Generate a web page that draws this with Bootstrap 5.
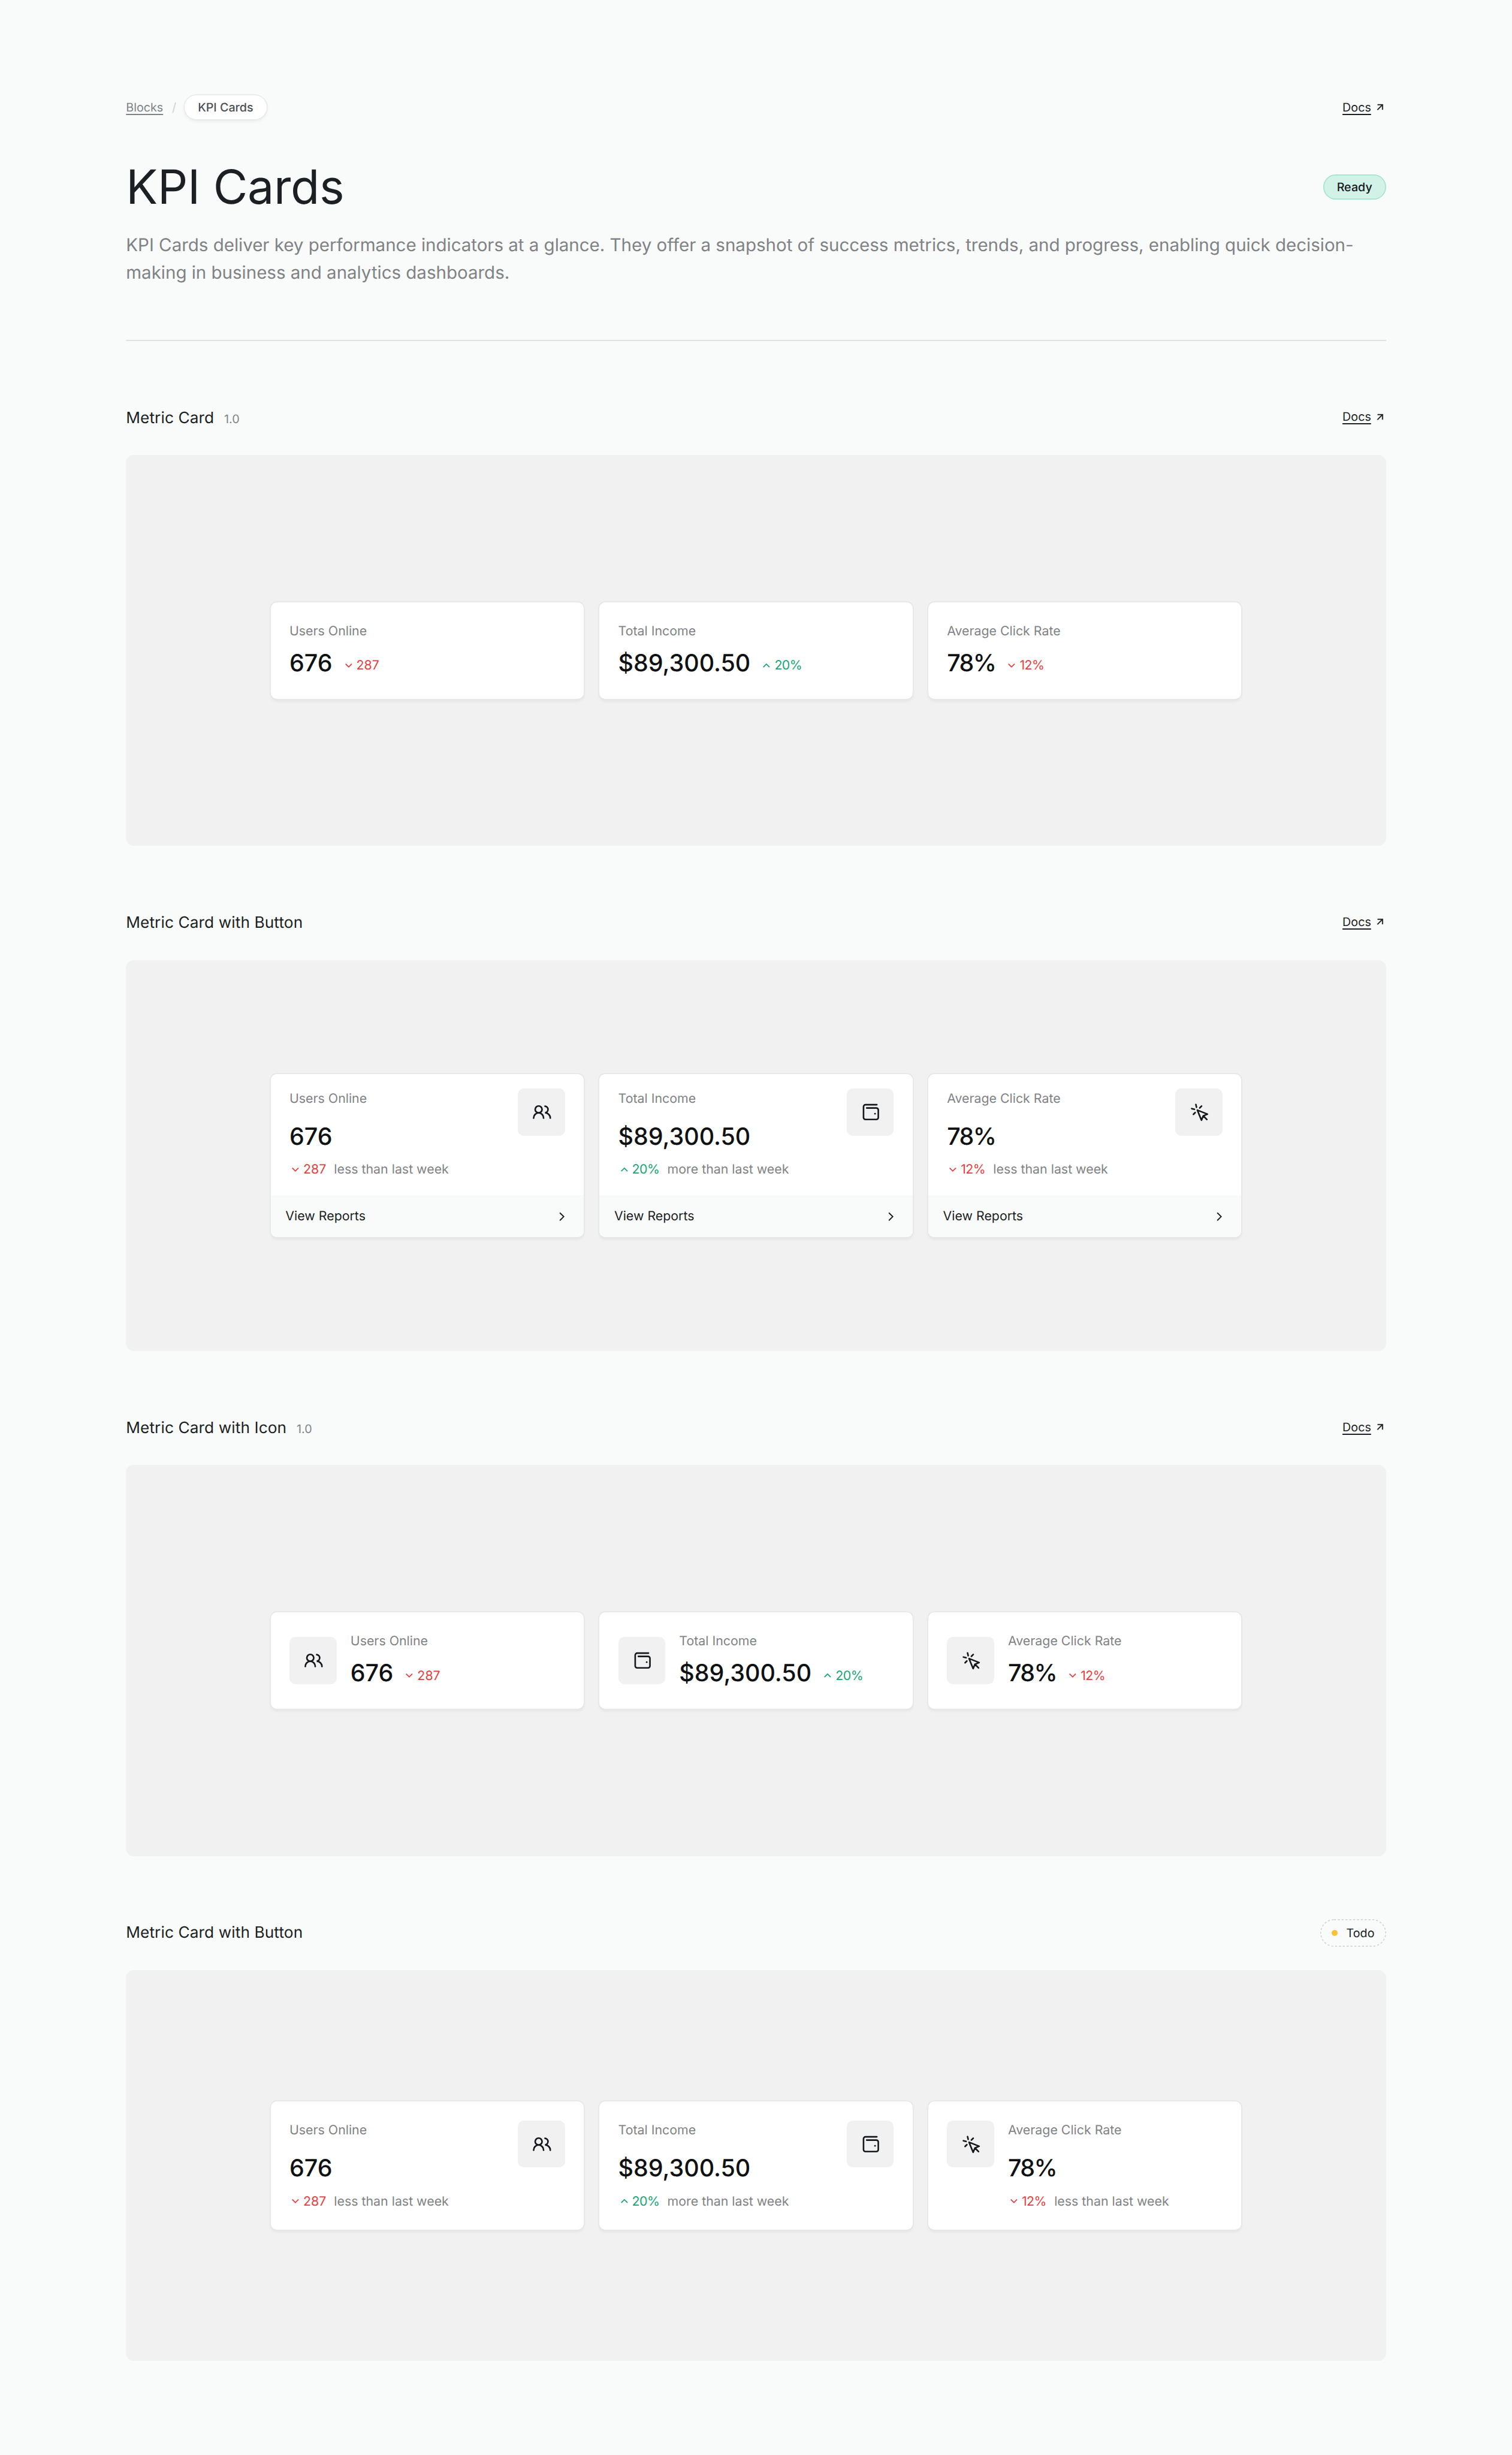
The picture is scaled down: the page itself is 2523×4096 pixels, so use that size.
<!DOCTYPE html>
<html lang="en">
<head>
<meta charset="utf-8">
<meta name="viewport" content="width=device-width, initial-scale=1">
<title>KPI Cards</title>
<link href="https://cdn.jsdelivr.net/npm/bootstrap@5.3.0/dist/css/bootstrap.min.css" rel="stylesheet">
<style>
  /* 1rem is 16 design pixels on a 1536-wide canvas */
  html { font-size: 26.28125px; }
  body {
    font-family: Inter, "Liberation Sans", sans-serif;
    font-size: .8125rem; line-height: 1.25rem;
    background: #f9fbfa; color: #1c1f24;
    text-rendering: geometricPrecision;
  }
  .page { width: 80rem; padding: 6rem 0; }
  .muted { color: #808285; }
  .crumbs, .docs, .pill { font-size: .75rem; line-height: 1rem; }
  .crumbs { height: 1.625rem; }
  .uline { text-decoration: underline; text-decoration-thickness: .0625rem; text-underline-offset: .155rem; }
  .slash { color: #cfd1d1; margin: 0 .5375rem 0 .5625rem; }
  .docs { color: #1c1f24; gap: .2rem; }
  .block-head .docs { margin-top: -.09rem; }
  .ico-12 { width: .75rem; height: .75rem; flex: none; }
  .ico-next { margin-right: .0625rem; }
  .pill { border-radius: 2rem; font-weight: 500; display: inline-flex; align-items: center; justify-content: center; }
  .pill-crumb { background: #fff; color: #4b4f55; height: 1.5rem; width: 5.1875rem;
    box-shadow: 0 0 0 .0625rem #e8eae9, 0 .125rem .25rem rgba(20,24,28,.07); }
  .pill-ready { background: #d3f2e7; color: #15181c; width: 4rem; height: 1.625rem; box-shadow: inset 0 0 0 .0625rem #9fe5cf; }
  .pill-todo { width: 4.1875rem; height: 1.75rem; font-weight: 400; gap: .5625rem; }
  .pill-todo svg { position: absolute; inset: 0; width: 100%; height: 100%; }
  .dot { width: .375rem; height: .375rem; border-radius: 50%; background: #fbc134; }
  .page-title { font-size: 3rem; line-height: 3.5rem; font-weight: 400; margin: 2.53rem 0 -.03rem; color: #1c1f24; letter-spacing: -.011rem; }
  .pill-ready { margin-top: 2.5rem; }
  .intro { font-size: 1.125rem; line-height: 1.75rem; margin: 1.05rem 0 3.3875rem; letter-spacing: -.0013rem; }
  .rule { height: 2px; background: #dfe1e0; }
  .block { margin-top: 4rem; }
  .block-head { height: 1.75rem; }
  .block-title { font-size: 1rem; line-height: 1.5rem; font-weight: 400; margin: .04rem 0 0; color: #1c1f24; letter-spacing: .003rem; }
  .ver { font-size: .75rem; margin-left: .64rem; }
  .stage { height: 24.8125rem; background: #f1f1f1; border-radius: .5rem; }
  .kpi { width: 19.875rem; background: #fff; border-radius: .375rem; overflow: hidden;
    box-shadow: 0 0 0 .0625rem #e7e7e7, 0 .125rem .1875rem rgba(20,24,28,.06); }
  .kpi-body { padding: 1.22rem 1.1875rem 0; }
  .kpi-flat { height: 6.125rem; }
  .kpi-tall { height: 8.125rem; }
  .kpi-linked { padding-top: .97rem; height: 7.6875rem; }
  .tile { width: 3rem; height: 3rem; border-radius: .375rem; background: #f1f1f1; color: #15181c; flex: none; margin-top: -.0325rem; }
  .gap-tile { gap: .875rem; }
  .tile-mid { margin-top: .3425rem; }
  .num { font-size: 1.5rem; line-height: 2rem; font-weight: 500; color: #0f1113; }
  .num-pct { letter-spacing: -.06rem; }
  .pct { letter-spacing: -.02rem; }
  .mt-num { margin-top: .375rem; }
  .mt-num-lg { margin-top: .75rem; }
  .trend { gap: .125rem; }
  .trend-side { margin: 0 0 .1875rem .65rem; }
  .down { color: #e93d3d; }
  .up { color: #14a775; }
  .foot { height: 2.6875rem; background: #f9fbfa; padding: .0625rem .9375rem 0; color: #1c1f24; }
</style>
</head>
<body>
<svg class="d-none" xmlns="http://www.w3.org/2000/svg">
  <symbol id="i-out" viewBox="0 0 24 24"><path fill="currentColor" stroke="currentColor" stroke-width=".4" d="M16.004 9.414l-8.607 8.607-1.414-1.414L14.59 8H7.004V6h11v11h-2V9.414z"/></symbol>
  <symbol id="i-down" viewBox="0 0 12 12"><path d="M2.85 4.05L6 7.2l3.15-3.15" fill="none" stroke="currentColor" stroke-width="1.1"/></symbol>
  <symbol id="i-up" viewBox="0 0 12 12"><path d="M2.85 7.4L6 4.25 9.15 7.4" fill="none" stroke="currentColor" stroke-width="1.1"/></symbol>
  <symbol id="i-next" viewBox="0 0 12 12"><path d="M4.1 2.4L7.7 6 4.1 9.6" fill="none" stroke="currentColor" stroke-width="1.2" stroke-linecap="round"/></symbol>
  <symbol id="i-users" viewBox="0 0 48 48"><g fill="none" stroke="currentColor" stroke-width="1.65" stroke-linecap="round"><circle cx="21.17" cy="21.3" r="3.5"/><path d="M16.1 30.1a5.05 5.3 0 0 1 10.1 0M27.7 18a3.4 3.4 0 0 1 0 6.75a5.3 5.3 0 0 1 5.3 5.35"/></g></symbol>
  <symbol id="i-wallet" viewBox="0 0 48 48"><path d="M30.5 16.5H19a2 2 0 0 0-2 2v11a2 2 0 0 0 2 2h11a2 2 0 0 0 2-2v-7.67a2 2 0 0 0-2-2H20.2" fill="none" stroke="currentColor" stroke-width="1.6" stroke-linecap="round" stroke-linejoin="round"/><circle cx="28.67" cy="25.67" r=".85" fill="currentColor"/></symbol>
  <symbol id="i-click" viewBox="0 0 48 48"><path d="M21 16.3l.65 2.8M16.8 20.5l2.7.7M26.8 17.9l-1.9 1.9M18.5 26.3l1.8-1.8M22.5 22l10.3 4.1-4.3 1.7-1.8 4.4zM28.7 28l3.5 3.6" fill="none" stroke="currentColor" stroke-width="1.6" stroke-linecap="round" stroke-linejoin="round"/></symbol>
</svg>

<main class="page mx-auto">
  <header>
    <div class="crumbs d-flex align-items-center justify-content-between">
      <nav class="d-flex align-items-center" aria-label="Breadcrumb">
        <a href="#" class="muted uline">Blocks</a><span class="slash">/</span><span class="pill pill-crumb">KPI Cards</span>
      </nav>
      <a href="#" class="docs d-flex align-items-center text-decoration-none"><span class="uline">Docs</span><svg class="ico-12"><use href="#i-out"/></svg></a>
    </div>
    <div class="d-flex align-items-center justify-content-between">
      <h1 class="page-title">KPI Cards</h1>
      <span class="pill pill-ready">Ready</span>
    </div>
    <p class="intro muted">KPI Cards deliver key performance indicators at a glance. They offer a snapshot of success metrics, trends, and progress, enabling quick decision-<br>making in business and analytics dashboards.</p>
    <div class="rule"></div>
  </header>

  <section class="block">
    <div class="block-head d-flex align-items-center justify-content-between">
      <div class="d-flex align-items-baseline"><h2 class="block-title">Metric Card</h2><span class="ver muted">1.0</span></div>
      <a href="#" class="docs d-flex align-items-center text-decoration-none"><span class="uline">Docs</span><svg class="ico-12"><use href="#i-out"/></svg></a>
    </div>
    <div class="stage mt-4 d-flex align-items-center justify-content-center gap-3">
      <div class="kpi"><div class="kpi-body kpi-flat">
        <div class="muted">Users Online</div>
        <div class="mt-num d-flex align-items-end"><span class="num">676</span><span class="trend trend-side down d-flex align-items-center"><svg class="ico-12"><use href="#i-down"/></svg>287</span></div>
      </div></div>
      <div class="kpi"><div class="kpi-body kpi-flat">
        <div class="muted">Total Income</div>
        <div class="mt-num d-flex align-items-end"><span class="num">$89,300.50</span><span class="trend trend-side up pct d-flex align-items-center"><svg class="ico-12"><use href="#i-up"/></svg>20%</span></div>
      </div></div>
      <div class="kpi"><div class="kpi-body kpi-flat">
        <div class="muted">Average Click Rate</div>
        <div class="mt-num d-flex align-items-end"><span class="num num-pct">78%</span><span class="trend trend-side down pct d-flex align-items-center"><svg class="ico-12"><use href="#i-down"/></svg>12%</span></div>
      </div></div>
    </div>
  </section>

  <section class="block">
    <div class="block-head d-flex align-items-center justify-content-between">
      <h2 class="block-title">Metric Card with Button</h2>
      <a href="#" class="docs d-flex align-items-center text-decoration-none"><span class="uline">Docs</span><svg class="ico-12"><use href="#i-out"/></svg></a>
    </div>
    <div class="stage mt-4 d-flex align-items-center justify-content-center gap-3">
      <div class="kpi">
        <div class="kpi-body kpi-linked d-flex justify-content-between">
          <div>
            <div class="muted">Users Online</div>
            <div class="num mt-num-lg">676</div>
            <div class="d-flex gap-2 mt-2"><span class="trend down d-flex align-items-center"><svg class="ico-12"><use href="#i-down"/></svg>287</span><span class="muted">less than last week</span></div>
          </div>
          <svg class="tile"><use href="#i-users"/></svg>
        </div>
        <div class="foot d-flex align-items-center justify-content-between"><span>View Reports</span><svg class="ico-12 ico-next"><use href="#i-next"/></svg></div>
      </div>
      <div class="kpi">
        <div class="kpi-body kpi-linked d-flex justify-content-between">
          <div>
            <div class="muted">Total Income</div>
            <div class="num mt-num-lg">$89,300.50</div>
            <div class="d-flex gap-2 mt-2"><span class="trend up pct d-flex align-items-center"><svg class="ico-12"><use href="#i-up"/></svg>20%</span><span class="muted">more than last week</span></div>
          </div>
          <svg class="tile"><use href="#i-wallet"/></svg>
        </div>
        <div class="foot d-flex align-items-center justify-content-between"><span>View Reports</span><svg class="ico-12 ico-next"><use href="#i-next"/></svg></div>
      </div>
      <div class="kpi">
        <div class="kpi-body kpi-linked d-flex justify-content-between">
          <div>
            <div class="muted">Average Click Rate</div>
            <div class="num num-pct mt-num-lg">78%</div>
            <div class="d-flex gap-2 mt-2"><span class="trend down pct d-flex align-items-center"><svg class="ico-12"><use href="#i-down"/></svg>12%</span><span class="muted">less than last week</span></div>
          </div>
          <svg class="tile"><use href="#i-click"/></svg>
        </div>
        <div class="foot d-flex align-items-center justify-content-between"><span>View Reports</span><svg class="ico-12 ico-next"><use href="#i-next"/></svg></div>
      </div>
    </div>
  </section>

  <section class="block">
    <div class="block-head d-flex align-items-center justify-content-between">
      <div class="d-flex align-items-baseline"><h2 class="block-title">Metric Card with Icon</h2><span class="ver muted">1.0</span></div>
      <a href="#" class="docs d-flex align-items-center text-decoration-none"><span class="uline">Docs</span><svg class="ico-12"><use href="#i-out"/></svg></a>
    </div>
    <div class="stage mt-4 d-flex align-items-center justify-content-center gap-3">
      <div class="kpi"><div class="kpi-body kpi-flat d-flex gap-tile">
        <svg class="tile tile-mid"><use href="#i-users"/></svg>
        <div>
          <div class="muted">Users Online</div>
          <div class="mt-num d-flex align-items-end"><span class="num">676</span><span class="trend trend-side down d-flex align-items-center"><svg class="ico-12"><use href="#i-down"/></svg>287</span></div>
        </div>
      </div></div>
      <div class="kpi"><div class="kpi-body kpi-flat d-flex gap-tile">
        <svg class="tile tile-mid"><use href="#i-wallet"/></svg>
        <div>
          <div class="muted">Total Income</div>
          <div class="mt-num d-flex align-items-end"><span class="num">$89,300.50</span><span class="trend trend-side up pct d-flex align-items-center"><svg class="ico-12"><use href="#i-up"/></svg>20%</span></div>
        </div>
      </div></div>
      <div class="kpi"><div class="kpi-body kpi-flat d-flex gap-tile">
        <svg class="tile tile-mid"><use href="#i-click"/></svg>
        <div>
          <div class="muted">Average Click Rate</div>
          <div class="mt-num d-flex align-items-end"><span class="num num-pct">78%</span><span class="trend trend-side down pct d-flex align-items-center"><svg class="ico-12"><use href="#i-down"/></svg>12%</span></div>
        </div>
      </div></div>
    </div>
  </section>

  <section class="block">
    <div class="block-head d-flex align-items-center justify-content-between">
      <h2 class="block-title">Metric Card with Button</h2>
      <span class="pill pill-todo position-relative">
        <svg viewBox="0 0 67 28"><rect x=".5" y=".5" width="66" height="27" rx="13.5" fill="none" stroke="#d2d4d3" stroke-dasharray="2 1.9"/></svg>
        <span class="dot"></span>Todo</span>
    </div>
    <div class="stage mt-4 d-flex align-items-center justify-content-center gap-3">
      <div class="kpi"><div class="kpi-body kpi-tall d-flex justify-content-between">
        <div>
          <div class="muted">Users Online</div>
          <div class="num mt-num-lg">676</div>
          <div class="d-flex gap-2 mt-2"><span class="trend down d-flex align-items-center"><svg class="ico-12"><use href="#i-down"/></svg>287</span><span class="muted">less than last week</span></div>
        </div>
        <svg class="tile"><use href="#i-users"/></svg>
      </div></div>
      <div class="kpi"><div class="kpi-body kpi-tall d-flex justify-content-between">
        <div>
          <div class="muted">Total Income</div>
          <div class="num mt-num-lg">$89,300.50</div>
          <div class="d-flex gap-2 mt-2"><span class="trend up pct d-flex align-items-center"><svg class="ico-12"><use href="#i-up"/></svg>20%</span><span class="muted">more than last week</span></div>
        </div>
        <svg class="tile"><use href="#i-wallet"/></svg>
      </div></div>
      <div class="kpi"><div class="kpi-body kpi-tall d-flex gap-tile">
        <svg class="tile"><use href="#i-click"/></svg>
        <div>
          <div class="muted">Average Click Rate</div>
          <div class="num num-pct mt-num-lg">78%</div>
          <div class="d-flex gap-2 mt-2"><span class="trend down pct d-flex align-items-center"><svg class="ico-12"><use href="#i-down"/></svg>12%</span><span class="muted">less than last week</span></div>
        </div>
      </div></div>
    </div>
  </section>
</main>
<script src="https://cdn.jsdelivr.net/npm/bootstrap@5.3.0/dist/js/bootstrap.bundle.min.js"></script>
</body>
</html>
